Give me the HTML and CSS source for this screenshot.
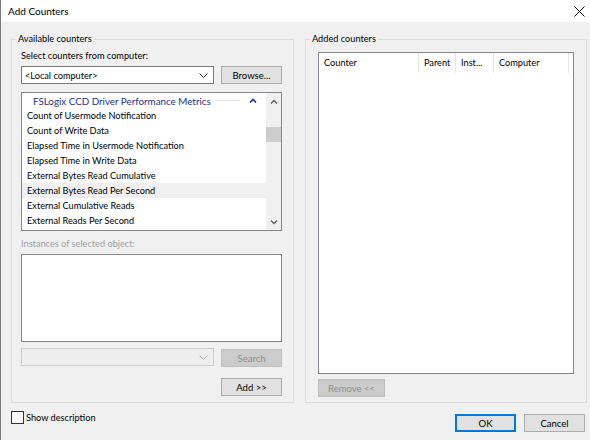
FILE: index.html
```html
<!DOCTYPE html>
<html lang="en">
<head>
  <meta charset="UTF-8" />
  <title>Add Counters</title>
  <link rel="stylesheet" href="styles.css">
</head>
<body>
  <div class="titlebar">
    <span>Add Counters</span>
    <svg class="close" width="11" height="11" viewBox="0 0 11 11"><path d="M0.5 0.5L10.5 10.5M10.5 0.5L0.5 10.5" stroke="#000" stroke-width="1"/></svg>
  </div>

  <div class="panels">
    <fieldset class="group">
      <legend>Available counters</legend>
      <div class="group-body left">
        <div class="label">Select counters from computer:</div>
        <div class="row">
          <div class="combo">
            <span>&lt;Local computer&gt;</span>
            <svg width="9" height="5" viewBox="0 0 9 5"><path d="M0.5 0.5L4.5 4.5L8.5 0.5" fill="none" stroke="#333"/></svg>
          </div>
          <button class="btn browse">Browse...</button>
        </div>

        <div class="listbox">
          <div class="list">
            <div class="list-head">
              <span>FSLogix CCD Driver Performance Metrics</span>
              <span class="head-line"></span>
              <svg width="8" height="5" viewBox="0 0 8 5"><path d="M1 4.5L4 1.5L7 4.5" fill="none" stroke="#1e3287" stroke-width="1.6"/></svg>
            </div>
            <div class="item">Count of Usermode Notification</div>
            <div class="item">Count of Write Data</div>
            <div class="item">Elapsed Time in Usermode Notification</div>
            <div class="item">Elapsed Time in Write Data</div>
            <div class="item">External Bytes Read Cumulative</div>
            <div class="item hover">External Bytes Read Per Second</div>
            <div class="item">External Cumulative Reads</div>
            <div class="item">External Reads Per Second</div>
          </div>
          <div class="scrollbar">
            <svg width="8" height="5" viewBox="0 0 8 5"><path d="M1 4.5L4 1.5L7 4.5" fill="none" stroke="#606060" stroke-width="1.4"/></svg>
            <div class="track"><div class="thumb"></div></div>
            <svg width="8" height="5" viewBox="0 0 8 5"><path d="M1 0.5L4 3.5L7 0.5" fill="none" stroke="#606060" stroke-width="1.4"/></svg>
          </div>
        </div>

        <div class="label disabled instances">Instances of selected object:</div>
        <div class="box instances-box"></div>

        <div class="row search-row">
          <div class="combo off">
            <span></span>
            <svg width="9" height="5" viewBox="0 0 9 5"><path d="M0.5 0.5L4.5 4.5L8.5 0.5" fill="none" stroke="#bcbcbc"/></svg>
          </div>
          <button class="btn off search">Search</button>
        </div>

        <div class="add-row">
          <button class="btn add">Add &gt;&gt;</button>
        </div>
      </div>
    </fieldset>

    <fieldset class="group">
      <legend>Added counters</legend>
      <div class="group-body right">
        <div class="listview">
          <div class="lv-head">
            <span class="col c1">Counter</span>
            <span class="col c2">Parent</span>
            <span class="col c3">Inst...</span>
            <span class="col c4">Computer</span>
          </div>
        </div>
        <button class="btn off remove">Remove &lt;&lt;</button>
      </div>
    </fieldset>
  </div>

  <div class="footer">
    <label class="check"><span class="checkbox"></span>Show description</label>
    <div class="actions">
      <button class="btn default">OK</button>
      <button class="btn">Cancel</button>
    </div>
  </div>
</body>
</html>
```

FILE: styles.css
```css
* { box-sizing: border-box; margin: 0; padding: 0; }

body {
  width: 590px;
  height: 440px;
  overflow: hidden;
  background-color: #f0f0f0;
  border-left: 1px solid #7a7a7a;
  font-family: Lato, "Noto Sans", sans-serif;
  font-size: 9.2px;
  color: #000;
}

.titlebar {
  height: 22px;
  background-color: #fff;
  display: flex;
  justify-content: space-between;
  align-items: center;
  padding: 0 5px 0 7px;
  font-size: 10px;
}

.panels {
  display: flex;
  gap: 11px;
  padding: 10px 0 0 10px;
}

.group {
  width: 282px;
  height: 371px;
  border: 1px solid #dcdcdc;
  padding: 0;
}

.group legend {
  margin-left: 4px;
  padding: 0 2px;
  line-height: 14px;
}

.group-body.left {
  padding: 3px 11px 0 9px;
}

.group-body.right {
  padding: 6px 0 0 12px;
}

.label {
  line-height: 14px;
}

.label.disabled {
  color: #a0a0a0;
}

.row {
  display: flex;
  gap: 7px;
  margin-top: 3px;
}

.combo {
  width: 193px;
  height: 18px;
  background-color: #fff;
  border: 1px solid #7a7a7a;
  display: flex;
  justify-content: space-between;
  align-items: center;
  padding: 0 5px 0 3px;
}

.combo.off {
  background-color: #eeeeee;
  border-color: #cccccc;
}

.btn {
  height: 18px;
  background-color: #e1e1e1;
  border: 1px solid #adadad;
  font-family: inherit;
  font-size: 9.5px;
  color: #000;
}

.btn.off {
  background-color: #cccccc;
  border-color: #bfbfbf;
  color: #8c8c8c;
}

.browse {
  width: 61px;
}

.listbox {
  margin-top: 8px;
  height: 139px;
  border: 1px solid #828790;
  background-color: #fff;
  display: flex;
}

.list {
  flex: 1;
}

.list-head {
  height: 15px;
  display: flex;
  align-items: center;
  padding: 0 9px 0 11px;
  color: #1e3287;
  font-size: 9.8px;
}

.head-line {
  flex: 1;
  height: 1px;
  background-color: #e3e6ee;
  margin: 0 9px 0 4px;
}

.item {
  height: 15px;
  line-height: 15px;
  padding-left: 5px;
}

.item.hover {
  background-color: #f0f0f0;
}

.scrollbar {
  width: 15px;
  background-color: #f0f0f0;
  display: flex;
  flex-direction: column;
  align-items: center;
  padding: 6px 0 5px;
}

.track {
  flex: 1;
  width: 100%;
  padding-top: 23px;
}

.thumb {
  height: 15px;
  background-color: #cdcdcd;
}

.instances {
  margin-top: 6px;
}

.box {
  border: 1px solid #828790;
  background-color: #fff;
}

.instances-box {
  margin-top: 3px;
  height: 88px;
}

.search-row {
  margin-top: 6px;
}

.search {
  width: 61px;
  margin-top: 1px;
}

.add-row {
  display: flex;
  justify-content: flex-end;
  margin-top: 11px;
}

.add {
  width: 61px;
}

.listview {
  width: 256px;
  height: 322px;
  border: 1px solid #828790;
  background-color: #fff;
}

.lv-head {
  display: flex;
  height: 20px;
}

.col {
  padding-left: 5px;
  line-height: 20px;
  border-right: 1px solid #e5e5e5;
}

.c1 { width: 100px; }
.c2 { width: 37px; }
.c3 { width: 38px; }
.c4 { width: 75px; }

.remove {
  width: 67px;
  margin-top: 5px;
}

.footer {
  display: flex;
  justify-content: space-between;
  align-items: flex-start;
  padding: 8px 5px 0 10px;
}

.check {
  display: flex;
  align-items: center;
  gap: 2px;
  line-height: 13px;
}

.checkbox {
  width: 13px;
  height: 13px;
  background-color: #fff;
  border: 1px solid #333;
}

.actions {
  display: flex;
  gap: 8px;
  margin-top: 3px;
}

.actions .btn {
  width: 61px;
}

.btn.default {
  border-color: #0078d7;
  box-shadow: inset 0 0 0 1px #0078d7;
}
```
